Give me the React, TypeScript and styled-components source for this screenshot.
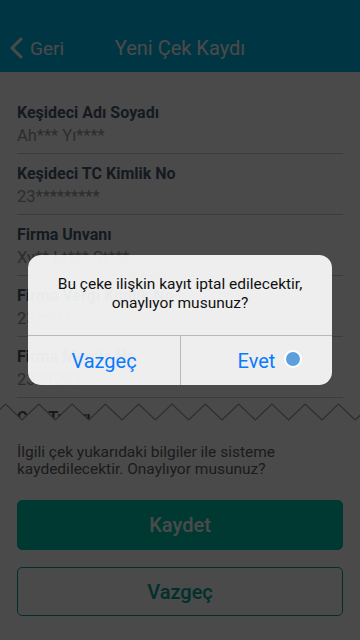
import styled, { createGlobalStyle } from "styled-components";

const GlobalStyle = createGlobalStyle`
  html, body {
    margin: 0;
    padding: 0;
  }
  body {
    font-family: Roboto, "Noto Sans", sans-serif;
    -webkit-font-smoothing: antialiased;
  }
  * {
    box-sizing: border-box;
  }
`;

const colors = {
  header: "#00b8e6",
  label: "#4a5a6e",
  value: "#999999",
  divider: "#cfcfcf",
  zigzag: "#9a9a9a",
  body: "#606060",
  primary: "#00c1ac",
  outline: "#00a596",
  iosBlue: "#0a7aff",
};

const Screen = styled.div`
  position: relative;
  width: 360px;
  height: 640px;
  display: flex;
  flex-direction: column;
  background: #fff;
  overflow: hidden;
`;

const NavBar = styled.header`
  flex: none;
  height: 72px;
  padding-top: 24px;
  display: grid;
  grid-template-columns: 1fr auto 1fr;
  align-items: center;
  background: ${colors.header};
  color: #fff;
`;

const BackButton = styled.div`
  display: flex;
  align-items: center;
  gap: 7px;
  padding-left: 9px;
  font-size: 19px;
`;

const Title = styled.h1`
  margin: 0;
  font-size: 20px;
  font-weight: 400;
`;

const Content = styled.main`
  flex: 1;
  min-height: 0;
  overflow: hidden;
  padding: 21px 17px 0;
`;

const Field = styled.div`
  padding: 10px 0 6px;
  border-bottom: 1px solid ${colors.divider};
`;

const Label = styled.div`
  font-size: 16px;
  line-height: 20px;
  font-weight: 700;
  color: ${colors.label};
`;

const Value = styled.div`
  margin-top: 2px;
  font-size: 16.5px;
  line-height: 22px;
  color: ${colors.value};
`;

const Footer = styled.footer`
  position: relative;
  z-index: 1;
  flex: none;
  margin-top: -18px;
`;

const Zigzag = styled.svg`
  display: block;
`;

const FooterBody = styled.div`
  background: #fff;
  padding: 23px 17px 24px;
`;

const Notice = styled.p`
  margin: 0 0 22px;
  font-size: 15.5px;
  line-height: 17px;
  color: ${colors.body};
`;

const Button = styled.button<{ $variant: "solid" | "outline" }>`
  display: flex;
  align-items: center;
  justify-content: center;
  width: 100%;
  height: ${(p) => (p.$variant === "solid" ? 50 : 49)}px;
  border-radius: 5px;
  font-family: inherit;
  font-size: 20px;
  font-weight: 500;
  border: 1px solid ${(p) => (p.$variant === "solid" ? colors.primary : colors.outline)};
  background: ${(p) => (p.$variant === "solid" ? colors.primary : "#fff")};
  color: ${(p) => (p.$variant === "solid" ? "#fff" : colors.outline)};

  & + & {
    margin-top: 17px;
  }
`;

const Overlay = styled.div`
  position: absolute;
  inset: 0;
  z-index: 2;
  display: flex;
  align-items: center;
  justify-content: center;
  background: rgba(0, 0, 0, 0.71);
`;

const Alert = styled.div`
  width: 304px;
  border-radius: 13px;
  overflow: hidden;
  background: rgba(255, 255, 255, 0.91);
`;

const AlertMessage = styled.div`
  padding: 20px 16px 22px;
  text-align: center;
  font-size: 15.5px;
  line-height: 19px;
  color: #111;
`;

const AlertActions = styled.div`
  display: grid;
  grid-template-columns: 1fr 1fr;
  border-top: 1px solid #b9b9b9;
`;

const AlertAction = styled.div`
  position: relative;
  height: 49px;
  display: flex;
  align-items: center;
  justify-content: center;
  font-size: 20px;
  color: ${colors.iosBlue};

  & + & {
    border-left: 1px solid #b9b9b9;
  }
`;

const TouchDot = styled.span`
  position: absolute;
  left: 103px;
  top: 14px;
  width: 18px;
  height: 18px;
  border-radius: 50%;
  background: #5d9fdd;
  border: 2px solid #fff;
`;

const fields = [
  { label: "Keşideci Adı Soyadı", value: "Ah*** Yı****" },
  { label: "Keşideci TC Kimlik No", value: "23*********" },
  { label: "Firma Unvanı", value: "Xy** Lt*** Şt***" },
  { label: "Firma Vergi Kimlik No", value: "23*****" },
  { label: "Firma Mersis No", value: "2321231" },
  { label: "Çek Tutarı", value: "1.250,00 TL" },
];

function zigzagPoints() {
  const period = 33.3;
  const pts: string[] = [];
  for (let x = 5.5 - period; x < 360 + period; x += period) {
    pts.push(`${x.toFixed(1)},1`);
    pts.push(`${(x + period / 2).toFixed(1)},17`);
  }
  return pts.join(" ");
}

export default function App() {
  const line = zigzagPoints();

  return (
    <>
      <GlobalStyle />
      <Screen>
        <NavBar>
          <BackButton>
            <svg width="14" height="22" viewBox="0 0 14 22">
              <path d="M12 2 L3 11 L12 20" fill="none" stroke="#fff" strokeWidth="3" strokeLinecap="round" strokeLinejoin="round" />
            </svg>
            Geri
          </BackButton>
          <Title>Yeni Çek Kaydı</Title>
          <span />
        </NavBar>

        <Content>
          {fields.map((f) => (
            <Field key={f.label}>
              <Label>{f.label}</Label>
              <Value>{f.value}</Value>
            </Field>
          ))}
        </Content>

        <Footer>
          <Zigzag width="360" height="18" viewBox="0 0 360 18">
            <polygon points={`-40,18 ${line} 400,18`} fill="#fff" />
            <polyline points={line} fill="none" stroke={colors.zigzag} strokeWidth="1.2" />
          </Zigzag>
          <FooterBody>
            <Notice>İlgili çek yukarıdaki bilgiler ile sisteme kaydedilecektir. Onaylıyor musunuz?</Notice>
            <Button $variant="solid">Kaydet</Button>
            <Button $variant="outline">Vazgeç</Button>
          </FooterBody>
        </Footer>

        <Overlay>
          <Alert>
            <AlertMessage>
              Bu çeke ilişkin kayıt iptal edilecektir,
              <br />
              onaylıyor musunuz?
            </AlertMessage>
            <AlertActions>
              <AlertAction>Vazgeç</AlertAction>
              <AlertAction>
                Evet
                <TouchDot />
              </AlertAction>
            </AlertActions>
          </Alert>
        </Overlay>
      </Screen>
    </>
  );
}
